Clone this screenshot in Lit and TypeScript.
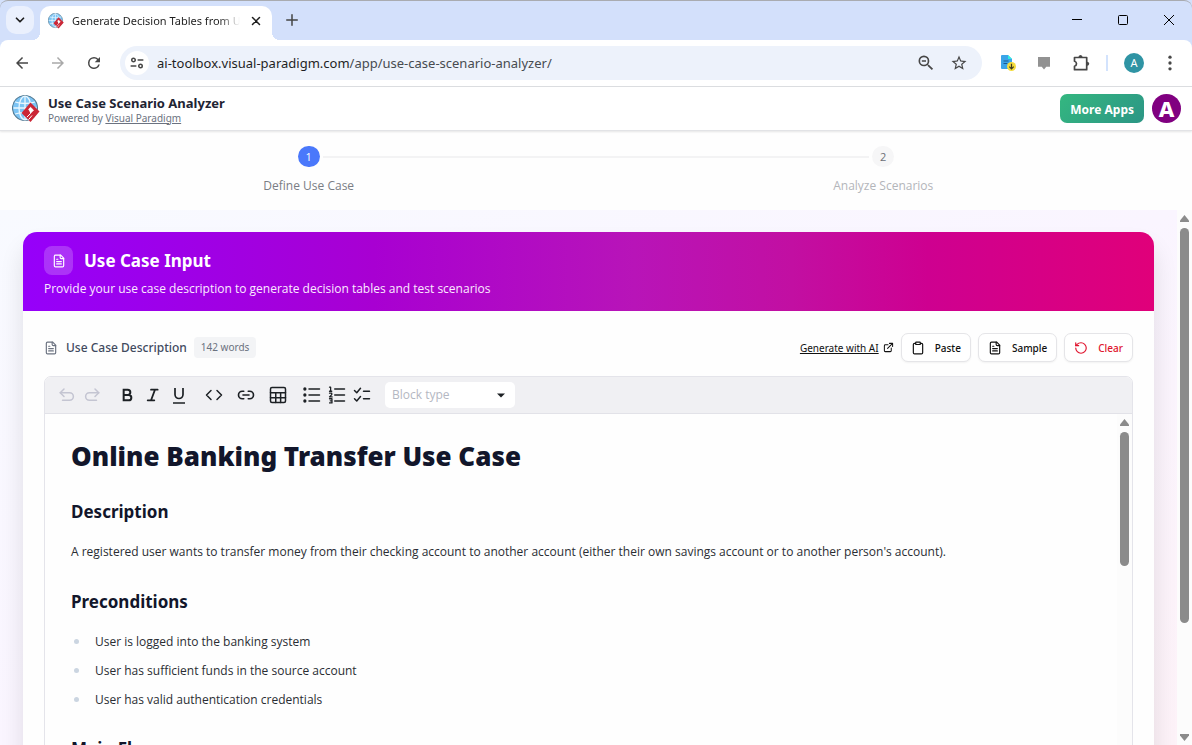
import { LitElement, html, css, svg, nothing } from "lit";
import { customElement } from "lit/decorators.js";

const stroke = (size: number, width: number, body: unknown, box = 24) => html`<svg
  width=${size} height=${size} viewBox="0 0 ${box} ${box}" fill="none" stroke="currentColor"
  stroke-width=${width} stroke-linecap="round" stroke-linejoin="round" aria-hidden="true">${body}</svg>`;

const solid = (size: number, body: unknown) => html`<svg
  width=${size} height=${size} viewBox="0 0 24 24" fill="currentColor" aria-hidden="true">${body}</svg>`;

const fileText = svg`<path d="M15 2H6a2 2 0 0 0-2 2v16a2 2 0 0 0 2 2h12a2 2 0 0 0 2-2V7Z"/><path d="M14 2v4a2 2 0 0 0 2 2h4"/><path d="M10 9H8M16 13H8M16 17H8"/>`;

const icons = {
  chevron: stroke(14, 3, svg`<path d="m6 9 6 6 6-6"/>`),
  closeTab: stroke(14, 2.6, svg`<path d="M6 6l12 12M18 6 6 18"/>`),
  plus: stroke(18, 2, svg`<path d="M12 5v14M5 12h14"/>`),
  back: solid(18, svg`<path d="M20 11H7.83l5.59-5.59L12 4l-8 8 8 8 1.41-1.41L7.83 13H20z"/>`),
  forward: solid(18, svg`<path d="m12 4-1.41 1.41L16.17 11H4v2h12.17l-5.58 5.59L12 20l8-8z"/>`),
  reload: solid(18, svg`<path d="M17.65 6.35A7.96 7.96 0 0 0 12 4a8 8 0 1 0 7.73 10h-2.08A6 6 0 1 1 12 6c1.66 0 3.14.69 4.22 1.78L13 11h7V4z"/>`),
  tune: stroke(14, 2.6, svg`<circle cx="6" cy="7" r="3"/><path d="M14 7h8M2 17h8"/><circle cx="18" cy="17" r="3"/>`),
  zoomOut: solid(20, svg`<path d="M15.5 14h-.79l-.28-.27A6.47 6.47 0 0 0 16 9.5 6.5 6.5 0 1 0 9.5 16c1.61 0 3.09-.59 4.23-1.57l.27.28v.79l5 4.99L20.49 19zm-6 0a4.5 4.5 0 1 1 0-9 4.5 4.5 0 0 1 0 9zM7 8.600h5v1.800H7z"/>`),
  star: solid(18, svg`<path d="m22 9.240-7.190-.62L12 2 9.190 8.630 2 9.240l5.460 4.730L5.820 21 12 17.270 18.180 21l-1.630-7.030zM12 15.400l-3.760 2.270 1-4.280-3.320-2.880 4.380-.38L12 6.100l1.710 4.040 4.380.38-3.320 2.880 1 4.280z"/>`),
  comment: solid(18, svg`<path d="M4 4h16v13h-5l-3 3.500L9 17H4z"/>`),
  puzzle: html`<svg width="18" height="18" viewBox="0 0 18 18" fill="none" stroke="currentColor" stroke-width="1.700" stroke-linejoin="round" aria-hidden="true"><path d="M2.500 3.500h12.200v12.200H2.500v-3.400q2-.5 2-2.500t-2-2.500z"/><path fill="currentColor" d="M6.300 3.500q.2-2.500 2.200-2.500t2.200 2.500zM14.500 7.500q2.800.2 2.800 2.200t-2.800 2.200z" stroke="none"/></svg>`,
  dots: solid(20, svg`<circle cx="12" cy="5" r="2"/><circle cx="12" cy="12" r="2"/><circle cx="12" cy="19" r="2"/>`),
  download: html`<svg width="16" height="18" viewBox="0 0 16 18" aria-hidden="true"><path fill="#3ba4e8" d="M1 2a1 1 0 0 1 1-1h6l4 4v10H2a1 1 0 0 1-1-1z"/><path fill="#2ef0e0" d="M8 1l4 4H8z"/><path d="M3.500 7h5M3.500 9.500h4" stroke="#175a95"/><circle cx="11.500" cy="12.500" r="4.500" fill="#f4dc3c"/><path d="M11.500 9.800v5M9.300 12.600l2.200 2.200 2.200-2.200" fill="none" stroke="#3d3a20" stroke-width="1.200"/></svg>`,
  minimise: html`<svg width="12" height="12" viewBox="0 0 12 12" aria-hidden="true"><path d="M1 5.500h10" stroke="#000"/></svg>`,
  maximise: html`<svg width="12" height="12" viewBox="0 0 12 12" aria-hidden="true"><rect x="1.500" y="1.500" width="9" height="9" rx="1" fill="none" stroke="#000"/></svg>`,
  closeWindow: html`<svg width="12" height="12" viewBox="0 0 12 12" aria-hidden="true"><path d="M1 1l10 10M11 1 1 11" stroke="#000"/></svg>`,
  clipboard: stroke(14, 2, svg`<rect x="8" y="2" width="8" height="4" rx="1"/><path d="M16 4h2a2 2 0 0 1 2 2v14a2 2 0 0 1-2 2H6a2 2 0 0 1-2-2V6a2 2 0 0 1 2-2h2"/>`),
  file: stroke(14, 2, fileText),
  reset: stroke(14, 2, svg`<path d="M3 12a9 9 0 1 0 9-9 9.750 9.750 0 0 0-6.740 2.740L3 8"/><path d="M3 3v5h5"/>`),
  external: stroke(11, 2.2, svg`<path d="M14 3h7v7M21 3 10 14M18 13v6a2 2 0 0 1-2 2H5a2 2 0 0 1-2-2V8a2 2 0 0 1 2-2h6"/>`),
  undo: stroke(18, 2, svg`<path d="M8 4 3 9l5 5"/><path d="M3 9h12.500a5 5 0 0 1 0 10H6"/>`),
  redo: stroke(18, 2, svg`<path d="m16 4 5 5-5 5"/><path d="M21 9H8.500a5 5 0 0 0 0 10H18"/>`),
  bold: stroke(16, 3, svg`<path d="M7 4h6a4 4 0 0 1 0 8H7zM7 12h7.500a4 4 0 0 1 0 8H7z" stroke-linejoin="miter"/>`),
  italic: stroke(16, 2.6, svg`<path d="M9 4h10M4 20h10M15 4 9 20"/>`),
  underline: html`<svg width="16" height="20" viewBox="0 0 16 20" fill="none" stroke="currentColor" stroke-width="1.700" aria-hidden="true"><path d="M4 3v6.500a4 4 0 0 0 8 0V3M2 18h12"/></svg>`,
  code: stroke(20, 2, svg`<path d="m8 6-6 6 6 6M16 6l6 6-6 6"/>`),
  link: stroke(20, 2.2, svg`<path d="M9 17H7A5 5 0 0 1 7 7h2M15 7h2a5 5 0 0 1 0 10h-2M8 12h8"/>`),
  table: stroke(18, 2, svg`<rect x="2" y="2" width="20" height="20" rx="2"/><path d="M2 9h20M2 15.500h20M9 9v13M15.500 9v13"/>`),
  bullets: stroke(18, 2, svg`<path d="M8 4h14M8 12h14M8 20h14"/><g fill="currentColor"><circle cx="2.500" cy="4" r="1.200"/><circle cx="2.500" cy="12" r="1.200"/><circle cx="2.500" cy="20" r="1.200"/></g>`),
  numbers: stroke(18, 2, svg`<path d="M9 4h13M9 12h13M9 20h13"/><path stroke-width="1.700" d="M2 1.500h1.500V7M2 7h3M2 9.500h3v2L2 14.500h3.500M2 17h3.300v5.500H2M3 19.700h2"/>`),
  checks: stroke(20, 2, svg`<path d="m2 6 3 3 5-6M2 17l3 3 5-6M14 7h8M14 17h8"/>`),
};

@customElement("globe-logo")
export class GlobeLogo extends LitElement {
  static properties = { size: { type: Number } };
  declare size: number;
  static styles = css`:host { display: flex; flex: none; }`;
  render() {
    return html`<svg width=${this.size} height=${this.size} viewBox="0 0 28 28" aria-hidden="true">
      <circle cx="13" cy="13" r="12.500" fill="#7cc4f4" stroke="#53788f" stroke-width="1.100"/>
      <g fill="none" stroke="#e9f7ff" stroke-width="1.300">
        <ellipse cx="13" cy="13" rx="6" ry="11.800"/><path d="M13 1.500v23M1.500 13h23M3 7q10 3 20 0M3 19q10-3 20 0"/>
      </g>
      <path d="M18.500 7.500 27.500 16.500 18.500 27 9.500 18z" fill="#cb2636"/>
      <path d="M16.500 14.500 18.500 12.300 21.500 15.200 18.500 18.200" fill="#fff" stroke="#fff" stroke-width=".8"/>
      <path d="M18.500 15v3.500l-3.600 3.600M20 20.500l-3.500 4.200" fill="none" stroke="#fff" stroke-width="1"/>
    </svg>`;
  }
}

@customElement("scroll-rail")
export class ScrollRail extends LitElement {
  static styles = css`
    :host { display: flex; flex-direction: column; align-items: center; width: 15px; flex: none; background: #fcfcfc; box-sizing: border-box; padding: 5px 0 0; color: #8b8b8b; }
    svg { flex: none; display: block; }
    .track { flex: 1; align-self: stretch; display: flex; justify-content: center; padding: 6px 0; min-height: 0; }
    .thumb { width: 9px; border-radius: 5px; background: #8b8b8b; }
  `;
  static properties = { share: { type: Number }, end: { type: Boolean } };
  declare share: number;
  declare end: boolean;
  render() {
    return html`
      <svg width="9" height="7" viewBox="0 0 9 7"><path d="M4.500 0 9 5.500V7H0V5.500z" fill="currentColor"/></svg>
      <div class="track"><div class="thumb" style="height:${this.share}%"></div></div>
      ${this.end ? html`<svg width="9" height="11" viewBox="0 0 9 11"><path d="M0 0h9v1.500L4.500 7 0 1.500z" fill="currentColor"/></svg>` : nothing}`;
  }
}

@customElement("browser-chrome")
export class BrowserChrome extends LitElement {
  static styles = css`
    :host { display: block; flex: none; color: #1f1f1f; background: #d3e0fb; font-family: "Noto Sans", sans-serif; }
    button { font: inherit; color: inherit; border: 0; padding: 0; background: none; display: flex; align-items: center; justify-content: center; }
    .tabs { display: flex; height: 40px; box-sizing: border-box; border-top: 1px solid #a9abb0; border-radius: 8px 8px 0 0; padding: 5px 0 0 6px; align-items: flex-start; }
    .search { width: 28px; height: 28px; border-radius: 10px; background: #eaf0fd; }
    .tab { position: relative; display: flex; align-items: center; gap: 8px; margin-left: 6px; width: 232px; height: 34px; box-sizing: border-box; padding: 0 8px 4px; background: #fff; border-radius: 10px 10px 0 0; }
    .tab::before, .tab::after { content: ""; position: absolute; bottom: 0; width: 8px; height: 8px; }
    .tab::before { right: 100%; background: radial-gradient(circle at 0 0, transparent 8px, #fff 8px); }
    .tab::after { left: 100%; background: radial-gradient(circle at 100% 0, transparent 8px, #fff 8px); }
    .name { flex: 1; min-width: 0; white-space: nowrap; overflow: hidden; font-size: 11px; line-height: 18px; mask-image: linear-gradient(90deg, #000 88%, transparent); }
    .close { width: 16px; height: 16px; }
    .add { width: 28px; height: 28px; margin-left: 6px; color: #444; }
    .window { margin-left: auto; display: flex; }
    .window button { width: 46px; height: 28px; }
    .bar { display: flex; align-items: center; height: 47px; box-sizing: border-box; border-bottom: 1px solid #dcdee1; border-radius: 8px 8px 0 0; background: #fff; padding: 0 12px; color: #474747; }
    .nav { display: flex; gap: 16px; }
    .nav button { width: 20px; height: 20px; }
    .nav .off { color: #a9a9a9; }
    .address { flex: 1; display: flex; align-items: center; height: 34px; border-radius: 17px; background: #edf2fb; margin: 0 18px 0 16px; padding: 0 14px 0 5px; box-sizing: border-box; }
    .site { width: 24px; height: 24px; border-radius: 50%; background: #fff; flex: none; margin-right: 8px; }
    .url { font-size: 13px; line-height: 20px; color: #474b50; flex: 1; white-space: nowrap; overflow: hidden; }
    .host { color: #1f1f1f; }
    .tools { display: flex; gap: 14px; }
    .ext { display: flex; align-items: center; gap: 16px; }
    .addons { display: flex; align-items: center; gap: 19px; }
    .note { color: #929292; }
    .rule { width: 2px; height: 16px; background: #d3e3fd; }
    .me { width: 20px; height: 20px; border-radius: 50%; background: #2f94a4; color: #fff; font-size: 11px; line-height: 20px; }
  `;
  render() {
    return html`
      <div class="tabs">
        <button class="search" aria-label="Search tabs">${icons.chevron}</button>
        <div class="tab"><globe-logo .size=${16}></globe-logo><span class="name">Generate Decision Tables from U</span><button class="close" aria-label="Close tab">${icons.closeTab}</button></div>
        <button class="add" aria-label="New tab">${icons.plus}</button>
        <div class="window">
          <button aria-label="Minimise">${icons.minimise}</button><button aria-label="Maximise">${icons.maximise}</button><button aria-label="Close">${icons.closeWindow}</button>
        </div>
      </div>
      <div class="bar">
        <div class="nav"><button aria-label="Back">${icons.back}</button><button class="off" aria-label="Forward">${icons.forward}</button><button aria-label="Reload">${icons.reload}</button></div>
        <div class="address">
          <button class="site" aria-label="Site information">${icons.tune}</button>
          <span class="url"><span class="host">ai-toolbox.visual-paradigm.com</span>/app/use-case-scenario-analyzer/</span>
          <div class="tools"><button aria-label="Zoom">${icons.zoomOut}</button><button aria-label="Bookmark">${icons.star}</button></div>
        </div>
        <div class="ext">
          <div class="addons"><button aria-label="Downloader">${icons.download}</button><button class="note" aria-label="Notes">${icons.comment}</button><button aria-label="Extensions">${icons.puzzle}</button></div>
          <span class="rule"></span><button class="me" aria-label="Profile">A</button><button aria-label="Menu">${icons.dots}</button>
        </div>
      </div>`;
  }
}

@customElement("rich-editor")
export class RichEditor extends LitElement {
  static styles = css`
    :host { display: flex; flex-direction: column; border: 1px solid #e4e4ea; border-radius: 7px 7px 0 0; overflow: hidden; height: 560px; box-sizing: border-box; }
    .bar { display: flex; align-items: center; height: 37px; box-sizing: border-box; background: #f0f0f3; border-bottom: 1px solid #e2e2e8; padding: 0 13px; color: #1c2024; flex: none; gap: 14px; }
    .group { display: flex; gap: 7px; }
    .marks { margin: 0 3px; gap: 8px; }
    .lists { margin-left: 2px; }
    button { border: 0; padding: 0; background: none; color: inherit; display: flex; align-items: center; justify-content: center; width: 18px; height: 20px; }
    button:disabled { color: #c4c5d2; }
    .pick { position: relative; display: flex; align-items: center; color: #1c2024; }
    select { appearance: none; font: inherit; font-size: 12px; line-height: 20px; color: #b4b7c2; width: 130px; height: 26px; border: 0; border-radius: 5px; background: #fff; padding: 0 7px; }
    .pick svg { position: absolute; right: 10px; pointer-events: none; }
    .body { flex: 1; display: flex; min-height: 0; }
    .doc { flex: 1; padding: 22px 26px; color: #2a2d33; font-size: 12px; line-height: 20px; }
    h1, h2 { margin: 0; color: #12162b; font-family: "Noto Sans", sans-serif; }
    h1 { font-size: 26px; line-height: 40px; font-weight: 900; }
    h2 { font-size: 17px; line-height: 24px; font-weight: 700; margin-top: 24px; }
    p { margin: 18px 0 0; }
    h2.later { margin-top: 28px; }
    ul { list-style: none; margin: 13px 0 0; padding: 0; }
    li { display: flex; align-items: center; gap: 16px; padding: 4px 0 4px 3px; line-height: 21px; }
    li::before { content: ""; width: 5px; height: 5px; border-radius: 50%; background: #cbd5e1; }
    ul + h2.later { margin-top: 23px; }
  `;
  render() {
    return html`
      <div class="bar">
        <div class="group"><button disabled aria-label="Undo">${icons.undo}</button><button disabled aria-label="Redo">${icons.redo}</button></div>
        <div class="group marks"><button aria-label="Bold">${icons.bold}</button><button aria-label="Italic">${icons.italic}</button><button aria-label="Underline">${icons.underline}</button></div>
        <button aria-label="Code">${icons.code}</button><button aria-label="Link">${icons.link}</button><button aria-label="Table">${icons.table}</button>
        <div class="group lists"><button aria-label="Bulleted list">${icons.bullets}</button><button aria-label="Numbered list">${icons.numbers}</button><button aria-label="Check list">${icons.checks}</button></div>
        <div class="pick"><select aria-label="Block type"><option>Block type</option></select><svg width="8" height="5" viewBox="0 0 8 5"><path d="M0 .5h8L4 4.500z" fill="currentColor"/></svg></div>
      </div>
      <div class="body">
        <div class="doc">
          <h1>Online Banking Transfer Use Case</h1>
          <h2>Description</h2>
          <p>A registered user wants to transfer money from their checking account to another account (either their own savings account or to another person's account).</p>
          <h2 class="later">Preconditions</h2>
          <ul><li>User is logged into the banking system</li><li>User has sufficient funds in the source account</li><li>User has valid authentication credentials</li></ul>
          <h2 class="later">Main Flow</h2>
        </div>
        <scroll-rail .share=${27}></scroll-rail>
      </div>`;
  }
}

@customElement("app-root")
export class AppRoot extends LitElement {
  static styles = css`
    :host { display: flex; flex-direction: column; height: 100vh; overflow: hidden; background: #fff; font-family: "Open Sans", "Noto Sans", sans-serif; color: #1e2433; }
    header { display: flex; align-items: center; gap: 8px; height: 44px; box-sizing: border-box; border-bottom: 1px solid #e2e3e6; box-shadow: 0 1px 2px #0000001a; padding: 0 11px 0 12px; flex: none; z-index: 1; font-family: "Noto Sans", sans-serif; }
    .brand { flex: 1; padding-top: 2px; }
    .product { font-size: 13px; line-height: 16px; font-weight: 700; margin: 0; }
    .powered { font-size: 10px; line-height: 14px; color: #6b7280; }
    .powered a { color: inherit; }
    .more { font: inherit; font-size: 12px; font-weight: 700; color: #fff; height: 29px; border: 0; border-radius: 7px; padding: 1px 10px 0; background: linear-gradient(135deg, #34b780, #2c9685); }
    .avatar { width: 29px; height: 29px; border-radius: 50%; background: #800080; color: #fff; font-weight: 800; font-size: 22px; line-height: 29px; text-align: center; }
    .steps { display: flex; justify-content: center; height: 79px; box-sizing: border-box; padding: 15px 0 0; background: #fefefe; flex: none; margin: 0; list-style: none; font-size: 12px; }
    .steps li { position: relative; display: flex; flex-direction: column; align-items: center; gap: 9px; width: 48.200%; color: #b3b5ba; line-height: 20px; }
    .steps li.now { color: #7a7d84; }
    .steps li.now::after { content: ""; position: absolute; left: 50%; width: calc(100% - 28px); margin-left: 14px; top: 10px; height: 2px; background: #f3f3f4; }
    .dot { width: 22px; height: 21px; border-radius: 11px; background: #f6f6f7; color: #6c6f76; font-size: 11px; line-height: 21px; text-align: center; }
    .now .dot { background: #4a78fb; color: #fff; }
    .page { flex: 1; min-height: 0; display: flex; }
    .scroll { flex: 1; min-width: 0; overflow: hidden; padding: 22px 23px 0; background: linear-gradient(to bottom right, #f8faff 0%, #faf5ff 50%, #fdf2f8 100%); }
    .card { background: #fefefe; border-radius: 14px 14px 0 0; box-shadow: 0 16px 24px #0000001c; }
    .banner { height: 79px; box-sizing: border-box; border-radius: 14px 14px 0 0; padding: 14px 21px; color: #fff; background: linear-gradient(90deg, #9600fa, #a800d2 31%, #b814b8 54%, #c20fa2 68%, #ce0090 80%, #e0007a); }
    .title { display: flex; align-items: center; gap: 11px; }
    .tile { width: 29px; height: 29px; border-radius: 8px; background: #ffffff33; display: flex; align-items: center; justify-content: center; }
    .title h2 { margin: 0; font-family: "Noto Sans", sans-serif; font-size: 17px; line-height: 28px; font-weight: 700; }
    .banner p { margin: 4px 0 0; font-size: 12px; line-height: 20px; color: #fbeaff; }
    .inner { padding: 22px 21px 0; }
    .row { display: flex; align-items: center; gap: 7px; margin-bottom: 14px; font-family: "Noto Sans", sans-serif; }
    .label { display: flex; align-items: center; gap: 8px; font-size: 12px; line-height: 20px; font-weight: 500; color: #414a5e; }
    .label svg { color: #6b7280; }
    .count { font-size: 10px; line-height: 21px; color: #6b7280; background: #f3f4f6; border-radius: 4px; padding: 0 7px; }
    .ai { margin-left: auto; display: flex; align-items: center; gap: 4px; color: #111; font-size: 10px; line-height: 20px; }
    .act { font: inherit; font-size: 10px; font-weight: 500; height: 29px; display: flex; align-items: center; gap: 10px; padding: 0 9px; background: #fff; border: 1px solid #e5e5e8; border-radius: 7px; color: #111; box-shadow: 0 1px 2px #0000000d; }
    .red { color: #e0142e; }
  `;
  render() {
    return html`
      <browser-chrome></browser-chrome>
      <header>
        <globe-logo .size=${28}></globe-logo>
        <div class="brand"><h1 class="product">Use Case Scenario Analyzer</h1><div class="powered">Powered by <a href="#">Visual Paradigm</a></div></div>
        <button class="more">More Apps</button><div class="avatar">A</div>
      </header>
      <ol class="steps"><li class="now"><span class="dot">1</span>Define Use Case</li><li><span class="dot">2</span>Analyze Scenarios</li></ol>
      <div class="page">
        <main class="scroll">
          <section class="card">
            <div class="banner">
              <div class="title"><span class="tile">${icons.file}</span><h2>Use Case Input</h2></div>
              <p>Provide your use case description to generate decision tables and test scenarios</p>
            </div>
            <div class="inner">
              <div class="row">
                <span class="label">${icons.file}Use Case Description</span><span class="count">142 words</span>
                <a class="ai" href="#">Generate with AI ${icons.external}</a>
                <button class="act">${icons.clipboard}Paste</button><button class="act">${icons.file}Sample</button><button class="act red">${icons.reset}Clear</button>
              </div>
              <rich-editor></rich-editor>
            </div>
          </section>
        </main>
        <scroll-rail .share=${79} .end=${true}></scroll-rail>
      </div>`;
  }
}
